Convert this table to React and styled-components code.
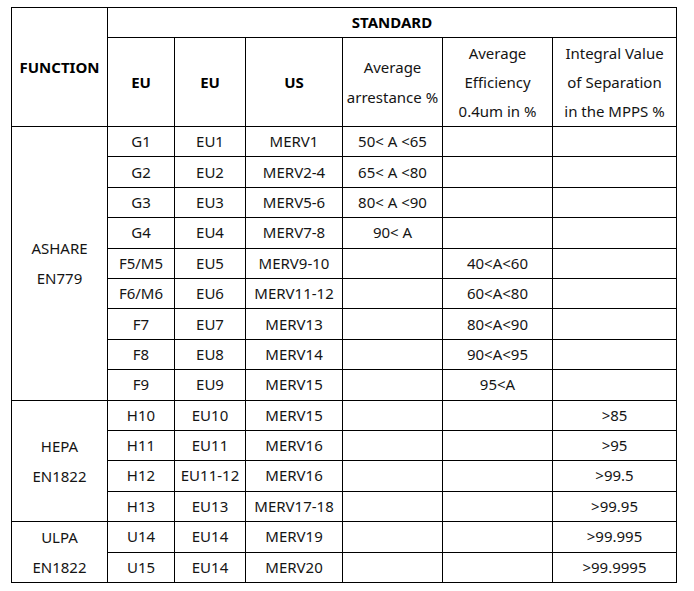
import React from "react";
import styled, { createGlobalStyle } from "styled-components";

const GlobalStyle = createGlobalStyle`
  html, body { margin: 0; padding: 0; background: #fff; }
  body { font-family: "Noto Sans", "Open Sans", sans-serif; }
`;

const Page = styled.div`
  padding: 7px 0 0 11px;
`;

const Table = styled.table`
  border-collapse: collapse;
  table-layout: fixed;
  width: 665px;
  font-family: "Noto Sans", "Open Sans", sans-serif;
  font-size: 15px;
  color: #141414;
`;

const Col = styled.col`
  width: ${(p) => p.$w}px;
`;

const Row = styled.tr`
  height: ${(p) => p.$h || 30.4}px;
`;

const Head = styled.th`
  border: 1px solid #000;
  padding: 0 2px;
  font-weight: 700;
  color: #000;
  text-align: center;
  vertical-align: middle;
  line-height: 29px;
`;

const SubHead = styled.th`
  border: 1px solid #000;
  padding: 0 1px;
  font-weight: 400;
  color: #141414;
  text-align: center;
  vertical-align: middle;
  line-height: ${(p) => p.$lh || 29}px;
  white-space: nowrap;
`;

const Cell = styled.td`
  border: 1px solid #000;
  padding: 0 1px;
  text-align: center;
  vertical-align: middle;
  line-height: 29px;
  white-space: nowrap;
`;

const GroupCell = styled(Cell)`
  line-height: 30px;
`;

const groups = [
  {
    name: ["ASHARE", "EN779"],
    rows: [
      ["G1", "EU1", "MERV1", "50< A <65", "", ""],
      ["G2", "EU2", "MERV2-4", "65< A <80", "", ""],
      ["G3", "EU3", "MERV5-6", "80< A <90", "", ""],
      ["G4", "EU4", "MERV7-8", "90< A", "", ""],
      ["F5/M5", "EU5", "MERV9-10", "", "40<A<60", ""],
      ["F6/M6", "EU6", "MERV11-12", "", "60<A<80", ""],
      ["F7", "EU7", "MERV13", "", "80<A<90", ""],
      ["F8", "EU8", "MERV14", "", "90<A<95", ""],
      ["F9", "EU9", "MERV15", "", "95<A", ""],
    ],
  },
  {
    name: ["HEPA", "EN1822"],
    rows: [
      ["H10", "EU10", "MERV15", "", "", ">85"],
      ["H11", "EU11", "MERV16", "", "", ">95"],
      ["H12", "EU11-12", "MERV16", "", "", ">99.5"],
      ["H13", "EU13", "MERV17-18", "", "", ">99.95"],
    ],
  },
  {
    name: ["ULPA", "EN1822"],
    rows: [
      ["U14", "EU14", "MERV19", "", "", ">99.995"],
      ["U15", "EU14", "MERV20", "", "", ">99.9995"],
    ],
  },
];

const widths = [96, 67, 71, 97, 100, 110, 124];

export default function App() {
  return (
    <Page>
      <GlobalStyle />
      <Table>
        <colgroup>
          {widths.map((w, i) => (
            <Col key={i} $w={w} />
          ))}
        </colgroup>
        <thead>
          <Row $h={30}>
            <Head rowSpan={2}>FUNCTION</Head>
            <Head colSpan={6}>STANDARD</Head>
          </Row>
          <Row $h={89}>
            <Head>EU</Head>
            <Head>EU</Head>
            <Head>US</Head>
            <SubHead $lh={30}>
              Average
              <br />
              arrestance %
            </SubHead>
            <SubHead>
              Average
              <br />
              Efficiency
              <br />
              0.4um in %
            </SubHead>
            <SubHead>
              Integral Value
              <br />
              of Separation
              <br />
              in the MPPS %
            </SubHead>
          </Row>
        </thead>
        <tbody>
          {groups.map((g) =>
            g.rows.map((r, i) => (
              <Row key={g.name[0] + i}>
                {i === 0 && (
                  <GroupCell rowSpan={g.rows.length}>
                    {g.name[0]}
                    <br />
                    {g.name[1]}
                  </GroupCell>
                )}
                {r.map((v, j) => (
                  <Cell key={j}>{v}</Cell>
                ))}
              </Row>
            ))
          )}
        </tbody>
      </Table>
    </Page>
  );
}
